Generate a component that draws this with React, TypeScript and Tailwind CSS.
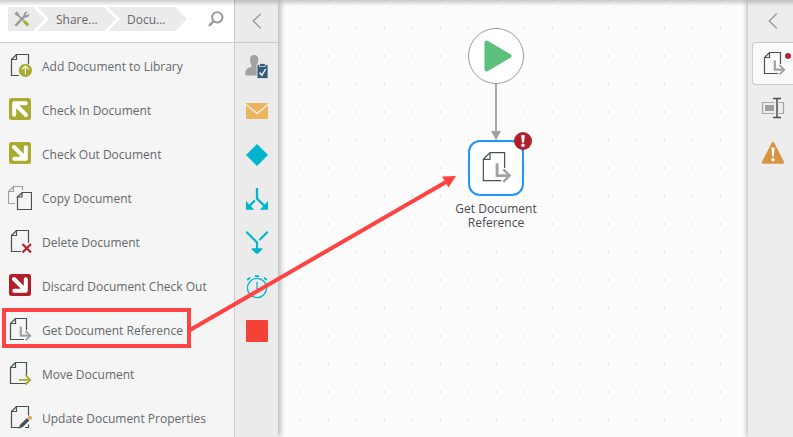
import type { ReactNode } from 'react'

const DOC_DARK = '#475052'
const OLIVE = '#a9ac2e'
const CYAN = '#00b4cc'

function Page({ d, color = DOC_DARK }: { d: string; color?: string }) {
  return <path d={d} fill="none" stroke={color} strokeWidth="1.2" vectorEffect="non-scaling-stroke" />
}

function Icon({ children, className = 'size-6' }: { children: ReactNode; className?: string }) {
  return (
    <svg viewBox="0 0 24 24" className={`${className} shrink-0`} aria-hidden="true">
      {children}
    </svg>
  )
}

function AddIcon() {
  return (
    <Icon>
      <Page d="M11 21.5H3.5V5.5L8.5 .5H20.5V10M3.5 5.5H8.5V.5" />
      <circle cx="17.4" cy="16.4" r="6.6" fill={OLIVE} />
      <path d="M17.4 20.5V12.5M14 15.4L17.4 12L20.8 15.4" fill="none" stroke="#fff" strokeWidth="1.2" />
    </Icon>
  )
}

function SquareArrowIcon({ color, flip }: { color: string; flip?: boolean }) {
  return (
    <Icon>
      <rect x="1" width="22" height="22" rx="2.5" fill={color} />
      <g transform={flip ? 'matrix(-1 0 0 -1 24 22)' : undefined}>
        <path d="M17.7 5.2H6.2V16.8M7 6L18 17" fill="none" stroke="#fff" strokeWidth="4" strokeLinecap="round" strokeLinejoin="round" />
      </g>
    </Icon>
  )
}

function CopyIcon() {
  return (
    <Icon>
      <Page color="#a0a0a0" d="M7 17.5H.5V5.5L5.5 .5H14.5V4M.5 5.5H5.5V.5" />
      <Page d="M9.5 11V23.5H23.5V6.5H14L9.5 11H14V6.5" />
    </Icon>
  )
}

function DeleteIcon() {
  return (
    <Icon>
      <Page d="M13 21.5H3.5V5.5L8.5 .5H20.5V13M3.5 5.5H8.5V.5" />
      <path d="M14.5 14L23 22.5M23 14L14.5 22.5" stroke="#b9202e" strokeWidth="2.2" />
    </Icon>
  )
}

function ReferenceIcon({ className }: { className?: string }) {
  return (
    <Icon className={className}>
      <Page d="M16 21.5H2.5V5.5L7.5 .5H18.5V12M2.5 5.5H7.5V.5" />
      <path d="M12.8 8.5V17.7H22" fill="none" stroke="#a2a2a2" strokeWidth="2.2" />
      <path d="M17.5 13L22.2 17.7L17.5 22.4" fill="none" stroke="#a2a2a2" strokeWidth="1.9" />
    </Icon>
  )
}

function MoveIcon() {
  return (
    <Icon>
      <Page d="M18.5 20V21.5H2.5V5.5L7.5 .5H18.5V14M2.5 5.5H7.5V.5" />
      <path d="M11 17.9H22M17.5 13.2L22.2 17.9L17.5 22.6" fill="none" stroke={OLIVE} strokeWidth="1.8" />
    </Icon>
  )
}

function UpdateIcon() {
  return (
    <Icon>
      <Page d="M11 21.5H3.5V5.5L8.5 .5H20.5V9.5M20.5 18.5V21.5H17M3.5 5.5H8.5V.5" />
      <path d="M10.5 22.8L12.3 18.6L19 12L21.4 14.4L14.7 21Z" fill={DOC_DARK} />
      <path d="M19.6 11.4L21.4 9.8Q24 9.8 24 12.4L22.1 13.9Z" fill="#e39b45" />
    </Icon>
  )
}

function ChevronLeft() {
  return (
    <svg viewBox="0 0 10 16" className="h-4 w-2.5" fill="none" stroke="#9b9b9b" strokeWidth="1.4" aria-hidden="true">
      <path d="M8.7 .7L1.2 8L8.7 15.3" />
    </svg>
  )
}

const ACTIONS = [
  { label: 'Add Document to Library', icon: <AddIcon /> },
  { label: 'Check In Document', icon: <SquareArrowIcon color={OLIVE} /> },
  { label: 'Check Out Document', icon: <SquareArrowIcon color={OLIVE} flip /> },
  { label: 'Copy Document', icon: <CopyIcon /> },
  { label: 'Delete Document', icon: <DeleteIcon /> },
  { label: 'Discard Document Check Out', icon: <SquareArrowIcon color="#b11f2b" flip /> },
  { label: 'Get Document Reference', icon: <ReferenceIcon /> },
  { label: 'Move Document', icon: <MoveIcon /> },
  { label: 'Update Document Properties', icon: <UpdateIcon /> },
]

const TOOLS = [
  {
    label: 'User task',
    icon: (
      <Icon>
        <path d="M9.2 0C12.2 0 13.6 2 13.4 4.8C13.2 8 11.8 9.4 11.6 11L13 12.4V20.6H.4C0 16.2 .6 14 3 13.2L6.7 11.4C6.6 9.6 5.2 8.4 5 4.8C4.8 2 6.2 0 9.2 0Z" fill="#a1a3a3" />
        <rect x="12" y="9.5" width="11" height="14" rx="1" fill="#335d7c" stroke="#ebebeb" strokeWidth=".8" />
        <rect x="14.6" y="8.6" width="5.6" height="3" fill="#335d7c" stroke="#ebebeb" strokeWidth=".7" />
        <path d="M14.6 17.5L16.8 20.3L20.7 14" fill="none" stroke="#fff" strokeWidth="1.4" />
      </Icon>
    ),
  },
  {
    label: 'Email',
    icon: (
      <Icon>
        <rect x="1" y="4" width="22" height="16" rx="1" fill="#ecb45f" />
        <path d="M1 5.5L12 14.5L23 5.5" fill="none" stroke="#ebebeb" strokeWidth="1.5" />
      </Icon>
    ),
  },
  {
    label: 'Decision',
    icon: (
      <Icon>
        <path d="M12 1.5L22.5 12L12 22.5L1.5 12Z" fill={CYAN} stroke={CYAN} strokeLinejoin="round" />
      </Icon>
    ),
  },
  {
    label: 'Split',
    icon: (
      <Icon>
        <path d="M12 1V11.5L19.5 19M9.8 13.5L4.5 19" fill="none" stroke={CYAN} strokeWidth="2.3" />
        <path d="M1 14L9.2 22.8H1ZM23 14L14.8 22.8H23Z" fill={CYAN} />
      </Icon>
    ),
  },
  {
    label: 'Merge',
    icon: (
      <Icon>
        <path d="M1.3 .8L12 11.5V19M22.7 .8L14.5 9" fill="none" stroke={CYAN} strokeWidth="2.1" />
        <path d="M6.7 17.2H17.3V18.4L12.8 22.8H11.2L6.7 18.4Z" fill={CYAN} />
      </Icon>
    ),
  },
  {
    label: 'Timer',
    icon: (
      <Icon>
        <circle cx="12" cy="13" r="9.6" fill="none" stroke={CYAN} strokeWidth="1.3" />
        <path d="M12 7V14H15" fill="none" stroke={CYAN} strokeWidth="1.2" />
        <path d="M10 1.2H14M2.2 5L5 2.6M21.8 5L19 2.6" stroke={CYAN} strokeWidth="1.8" />
      </Icon>
    ),
  },
  {
    label: 'End',
    icon: (
      <Icon>
        <rect x="1" y="1" width="22" height="22" rx="1" fill="#f44336" />
      </Icon>
    ),
  },
]

function Breadcrumbs() {
  return (
    <nav aria-label="Breadcrumb" className="flex h-6 text-xs leading-[26px]">
      <a href="#" aria-label="Toolbox" className="flex w-[37px] items-center bg-[#ebebeb] pl-1.5 [clip-path:polygon(0_0,25px_0,100%_50%,25px_100%,0_100%)]">
        <svg viewBox="0 0 16 16" className="size-4" aria-hidden="true">
          <path d="M.6 2.4L2.6 .5L5 2.2V3.8L10 8.8L8.6 10.2L3.6 5L2 4.6Z" fill="#9a9d9d" />
          <path d="M2.2 13.8L10.8 5.2" stroke="#9a9d9d" strokeWidth="2.6" strokeLinecap="round" />
          <path d="M13.8 .8L11.6 3L13 4.4L15.2 2.2C15.9 5 13.6 7 11 6.2L9.8 5C9 2.4 11 .1 13.8 .8Z" fill="#9a9d9d" />
          <path d="M10.4 9L14.8 12.6Q15.4 14.6 13.2 15.4L8.6 10.8Z" fill={OLIVE} />
        </svg>
      </a>
      <a href="#" className="-ml-2 w-[79px] bg-[#ebebeb] pl-[19px] [clip-path:polygon(0_0,67px_0,100%_50%,67px_100%,0_100%,12px_50%)]">Share...</a>
      <a href="#" className="-ml-2 w-[79px] bg-[#ebebeb] pl-[19px] [clip-path:polygon(0_0,67px_0,100%_50%,67px_100%,0_100%,12px_50%)]">Docu...</a>
    </nav>
  )
}

function Toolbox() {
  return (
    <aside className="flex w-[235px] shrink-0 flex-col border-r border-[#cbcbcb] bg-[#f5f5f5]">
      <div className="flex h-[43px] shrink-0 items-start justify-between border-b border-[#cbcbcb] bg-white pt-[7px] pr-2.5 pl-2">
        <Breadcrumbs />
        <button type="button" aria-label="Search" className="pt-1">
          <svg viewBox="0 0 16 16" className="size-4" fill="none" stroke="#969696" aria-hidden="true">
            <circle cx="9.3" cy="6.3" r="5.2" strokeWidth="1.9" />
            <path d="M5.5 10.3L1 15" strokeWidth="2.2" />
          </svg>
        </button>
      </div>
      <ul className="pt-px">
        {ACTIONS.map((a) => (
          <li key={a.label}>
            <button type="button" className="flex h-11 w-full items-center gap-2.5 px-2 text-left text-xs whitespace-nowrap">
              {a.icon}
              <span className="pt-0.5">{a.label}</span>
            </button>
          </li>
        ))}
      </ul>
    </aside>
  )
}

function ToolStrip() {
  return (
    <aside className="z-10 flex w-[43px] shrink-0 flex-col bg-[#ebebeb] shadow-[4px_0_5px_-1px_rgba(0,0,0,0.25)]">
      <button type="button" aria-label="Collapse toolbox" className="flex h-[43px] shrink-0 items-center justify-center border-b border-[#cbcbcb]">
        <ChevronLeft />
      </button>
      <div className="flex flex-col pt-0.5">
        {TOOLS.map((t) => (
          <button key={t.label} type="button" aria-label={t.label} className="flex h-11 items-center justify-center">
            {t.icon}
          </button>
        ))}
      </div>
    </aside>
  )
}

function Canvas() {
  return (
    <main className="relative flex-1 bg-[#fcfcfc] bg-[linear-gradient(to_bottom,#fcfcfc_26px,transparent_26px),linear-gradient(to_right,transparent_27px,#dadada_27px)] bg-size-[28px_28px] bg-position-[-5px_1px]">
      <svg className="absolute top-[84px] left-[212px] h-14 w-3" viewBox="0 0 12 56" aria-hidden="true">
        <path d="M6 0V48" stroke="#a8a8a8" strokeWidth="2" />
        <path d="M1 47H11L6 56Z" fill="#a0a0a0" />
      </svg>
      <button type="button" aria-label="Start" className="absolute top-7 left-[190px] flex size-14 items-center justify-center rounded-full border border-[#9b9b9b] bg-white">
        <svg viewBox="0 0 28 32" className="ml-1 h-8 w-7" aria-hidden="true">
          <path d="M2.5 2.5L25.5 16L2.5 29.5Z" fill="#59c17a" stroke="#59c17a" strokeWidth="4" strokeLinejoin="round" />
        </svg>
      </button>
      <div className="absolute top-[140px] left-[168px] flex w-[100px] flex-col items-center">
        <button type="button" aria-labelledby="step-name" className="relative flex size-14 items-center justify-center rounded-xl border-2 border-[#2196f3] bg-white">
          <ReferenceIcon className="size-8" />
          <svg viewBox="0 0 18 18" className="absolute -top-2.5 -right-2.5 size-[18px]" aria-hidden="true">
            <circle cx="9" cy="9" r="9" fill="#b0202c" />
            <path d="M7.2 3H10.8L10 10.5H8Z" fill="#fff" />
            <circle cx="9" cy="13.3" r="1.7" fill="#fff" />
          </svg>
        </button>
        <p id="step-name" className="pt-1.5 text-center text-xs leading-[14px] text-[#4a4a50]">Get Document Reference</p>
      </div>
    </main>
  )
}

function ConfigStrip() {
  return (
    <aside className="z-10 flex w-[45px] shrink-0 flex-col bg-[#ededed] pl-1 shadow-[0_0_6px_rgba(0,0,0,0.4)]">
      <button type="button" aria-label="Expand configuration" className="flex h-[42px] items-center justify-center">
        <ChevronLeft />
      </button>
      <button type="button" aria-label="Get Document Reference settings" className="relative flex h-[43px] items-center rounded-l border border-r-0 border-[#cbcbcb] bg-[#fafafa] pl-[9px]">
        <ReferenceIcon />
        <span className="absolute top-2 right-0 size-2.5 rounded-full border-2 border-white bg-[#c01f30] shadow" />
      </button>
      <button type="button" aria-label="Rename" className="flex h-[46px] items-center justify-center">
        <Icon>
          <path d="M13.5 6.5H1.5V17.5H13.5M18 6.5H22.5V17.5H18" fill="none" stroke="#a6a6a6" strokeWidth="1.2" />
          <rect x="4" y="9" width="9" height="6" fill="#a0a0a0" />
          <path d="M12 2.5H20M12 21.5H20M16 2.5V21.5" stroke="#475052" strokeWidth="1.5" />
        </Icon>
      </button>
      <button type="button" aria-label="Warnings" className="flex h-11 items-center justify-center">
        <Icon>
          <path d="M12 2L22 21.5H2Z" fill="#d99442" stroke="#d99442" strokeWidth="2.4" strokeLinejoin="round" />
          <path d="M10.4 6.5H13.6L12.8 15.5H11.2Z" fill="#fff" />
          <circle cx="12" cy="18.7" r="1.8" fill="#fff" />
        </Icon>
      </button>
    </aside>
  )
}

// Red frame and arrow that walk the reader from the toolbox entry to the placed step
function Callout() {
  return (
    <svg width="460" height="352" className="pointer-events-none absolute top-0 left-0 z-30" aria-hidden="true">
      <rect x="4" y="310" width="185" height="36" fill="none" stroke="#ff4343" strokeWidth="4" />
      <path d="M190 330L446 182" stroke="#ff4343" strokeWidth="4" />
      <path d="M456 176L448.5 187.5L442 176.5Z" fill="#ff4343" />
    </svg>
  )
}

export default function App() {
  return (
    <div className="relative flex h-screen overflow-hidden font-['Open_Sans','Noto_Sans',sans-serif] text-[#64696a]">
      <Toolbox />
      <ToolStrip />
      <Canvas />
      <ConfigStrip />
      <div className="pointer-events-none absolute inset-x-0 top-0 z-20 h-1.5 bg-linear-to-b from-black/20 to-transparent" />
      <Callout />
    </div>
  )
}
